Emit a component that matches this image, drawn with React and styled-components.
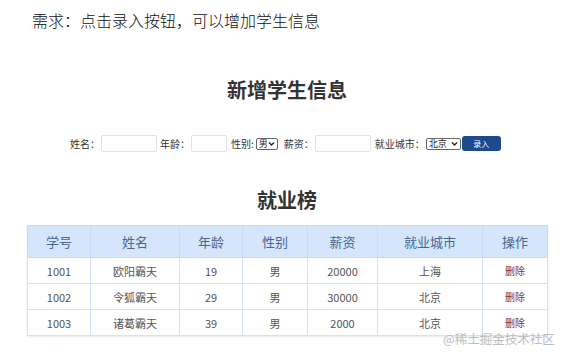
import React from "react";
import styled, { createGlobalStyle } from "styled-components";

const Global = createGlobalStyle`
  html, body { margin: 0; padding: 0; background: #fff; }
  body { font-family: "Noto Sans CJK SC", "Noto Sans", sans-serif; color: #333; }
`;

const Page = styled.div`
  position: relative;
  width: 566px;
  height: 359px;
  overflow: hidden;
  display: flex;
  flex-direction: column;
`;

const Note = styled.p`
  margin: 0;
  padding: 10px 0 0 32px;
  font-size: 16px;
  line-height: 20px;
  font-weight: 300;
  color: #111;
`;

const Title = styled.h2`
  margin: ${p => p.$top}px 0 0;
  text-align: center;
  font-size: 20px;
  line-height: 24px;
  font-weight: 700;
  color: #333;
  padding-left: ${p => p.$shift || 0}px;
`;

const Form = styled.div`
  margin: 33px 0 0 70px;
  display: flex;
  align-items: center;
  height: 17px;
`;

const Label = styled.label`
  font-size: 10px;
  line-height: 12px;
  color: #333;
  margin-left: ${p => p.$ml || 0}px;
  margin-right: ${p => p.$mr || 1}px;
  white-space: nowrap;
`;

const Input = styled.input`
  box-sizing: border-box;
  width: ${p => p.$w}px;
  height: 17px;
  border: 1px solid #dbe3ee;
  border-radius: 2px;
  padding: 0 3px;
  font-size: 10px;
  outline: none;
`;

const SelectWrap = styled.span`
  position: relative;
  display: inline-flex;
  margin-left: ${p => p.$ml || 0}px;
`;

const Select = styled.select`
  appearance: none;
  box-sizing: border-box;
  width: ${p => p.$w}px;
  height: 12px;
  border: 1px solid #666;
  border-radius: 2px;
  padding: 0 0 0 2px;
  font-family: "Noto Sans CJK SC", sans-serif;
  font-size: 9px;
  line-height: 10px;
  color: #222;
  background: #fff;
  outline: none;
`;

const Chevron = styled.svg`
  position: absolute;
  right: 3px;
  top: 3px;
  width: 7px;
  height: 6px;
  pointer-events: none;
`;

const Button = styled.button`
  box-sizing: border-box;
  width: 39px;
  height: 15px;
  margin-left: 1px;
  border: none;
  border-radius: 3px;
  background: #1e4a8d;
  color: #fff;
  font-family: "Noto Sans CJK SC", sans-serif;
  font-size: 8px;
  line-height: 15px;
  padding: 0;
`;

const Table = styled.table`
  margin: 13px 0 0 27px;
  width: 520px;
  table-layout: fixed;
  border-collapse: collapse;
  box-shadow: 0 1px 2px rgba(150, 170, 200, 0.25);
`;

const Th = styled.th`
  height: 31px;
  padding: 0;
  background: #d5e5fc;
  border: 1px solid #c7dbf6;
  font-size: 13px;
  font-weight: 400;
  color: #4a6790;
  text-align: center;
`;

const Td = styled.td`
  height: 25px;
  padding: 0;
  border: 1px solid #d3e2f8;
  font-size: ${p => (p.$danger ? 10 : 11)}px;
  color: ${p => (p.$danger ? "#8a2d2d" : "#555")};
  text-align: center;
`;

const Watermark = styled.div`
  position: absolute;
  left: 443px;
  top: 331px;
  font-size: 12.5px;
  line-height: 16px;
  color: #bdbdbd;
  white-space: nowrap;
  font-family: "Noto Sans CJK SC", sans-serif;
`;

const cols = [63, 89, 63, 65, 70, 105, 65];
const heads = ["学号", "姓名", "年龄", "性别", "薪资", "就业城市", "操作"];
const rows = [
  ["1001", "欧阳霸天", "19", "男", "20000", "上海"],
  ["1002", "令狐霸天", "29", "男", "30000", "北京"],
  ["1003", "诸葛霸天", "39", "男", "2000", "北京"],
];

const ChevronIcon = () => (
  <Chevron viewBox="0 0 7 6">
    <path d="M1 1.5 L3.5 4 L6 1.5" fill="none" stroke="#222" strokeWidth="1.4" />
  </Chevron>
);

export default function App() {
  return (
    <Page>
      <Global />
      <Note>需求：点击录入按钮，可以增加学生信息</Note>
      <Title $top={48} $shift={8}>新增学生信息</Title>
      <Form>
        <Label>姓名：</Label>
        <Input $w={56} />
        <Label $ml={3}>年龄：</Label>
        <Input $w={36} />
        <Label $ml={4} $mr={2}>性别:</Label>
        <SelectWrap>
          <Select $w={22} defaultValue="男">
            <option>男</option>
            <option>女</option>
          </Select>
          <ChevronIcon />
        </SelectWrap>
        <Label $ml={6}>薪资：</Label>
        <Input $w={56} />
        <Label $ml={4}>就业城市：</Label>
        <SelectWrap>
          <Select $w={35} defaultValue="北京">
            <option>北京</option>
            <option>上海</option>
          </Select>
          <ChevronIcon />
        </SelectWrap>
        <Button>录入</Button>
      </Form>
      <Title $top={36} $shift={8}>就业榜</Title>
      <Table>
        <colgroup>
          {cols.map((w, i) => (
            <col key={i} style={{ width: w }} />
          ))}
        </colgroup>
        <thead>
          <tr>
            {heads.map(h => (
              <Th key={h}>{h}</Th>
            ))}
          </tr>
        </thead>
        <tbody>
          {rows.map(r => (
            <tr key={r[0]}>
              {r.map((c, i) => (
                <Td key={i}>{c}</Td>
              ))}
              <Td $danger>删除</Td>
            </tr>
          ))}
        </tbody>
      </Table>
      <Watermark>@稀土掘金技术社区</Watermark>
    </Page>
  );
}
